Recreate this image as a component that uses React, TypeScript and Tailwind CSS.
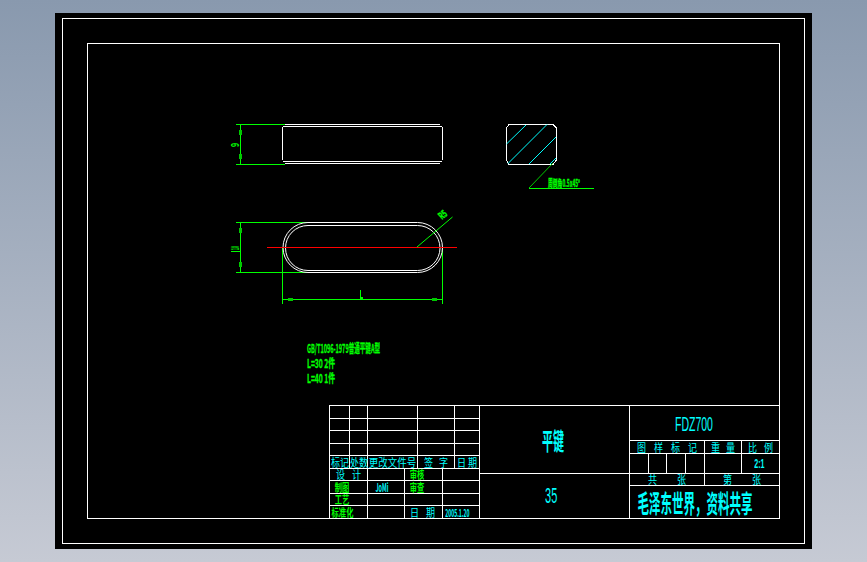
const CJK = '"Noto Sans CJK SC", "Liberation Sans", sans-serif';
const WHITE = '#ffffff';
const GREEN = '#00ff00';
const CYAN = '#00ffff';

const CYAN_TEXT = 'text-[11px] scale-x-[0.82] text-[#00ffff]';
const GREEN_TEXT = 'text-[11px] scale-x-[0.66] text-[#00ff00] font-bold';

const Label = ({
  children,
  className = CYAN_TEXT,
}: {
  children: React.ReactNode;
  className?: string;
}) => (
  <span className={`inline-block whitespace-nowrap leading-none font-['Noto_Sans_CJK_SC',sans-serif] ${className}`}>
    {children}
  </span>
);

const Cell = ({
  children,
  className = '',
}: {
  children?: React.ReactNode;
  className?: string;
}) => (
  <div className={`flex items-center justify-center overflow-visible border-white ${className}`}>
    {children}
  </div>
);

// widely spaced captions such as 图 样 标 记
const Spread = ({ text, className = '' }: { text: string; className?: string }) => (
  <div className={`flex items-center justify-between border-white ${className}`}>
    {text.split('').map((ch) => (
      <Label key={ch}>{ch}</Label>
    ))}
  </div>
);

const Drawing = () => (
  <svg
    className="block h-[361px] w-[691px] shrink-0"
    viewBox="88 44 691 361"
    fill="none"
    shapeRendering="crispEdges"
    fontFamily={CJK}
  >
    {/* front view */}
    <g stroke={WHITE}>
      <path d="M282.5 127V160M442.5 127V160" />
      <path d="M283 126.5H442M283 161.5H442" />
      <path d="M285 124.5H440M285 163.5H440" />
    </g>
    <g stroke={GREEN}>
      <path d="M236 124.5H285M236 164.5H285M240.5 124V165" />
      <path d="M236 222.5H307M236 272.5H307M240.5 222V273M231 251.5H240" />
      <path d="M282.5 248V304M442.5 248V304M282 299.5H443M360.5 290V299" />
    </g>
    <g fill="#00c800">
      <rect x="239" y="130" width="3" height="5" />
      <rect x="239" y="154" width="3" height="5" />
      <rect x="239" y="228" width="3" height="5" />
      <rect x="239" y="262" width="3" height="5" />
      <rect x="288" y="298" width="5" height="3" />
      <rect x="432" y="298" width="5" height="3" />
    </g>
    <text fill={GREEN} fontSize="11" fontWeight="700" textLength="4" lengthAdjust="spacingAndGlyphs" transform="translate(239,147) rotate(-90)">
      9
    </text>
    <text fill={GREEN} fontSize="11" fontWeight="700" textLength="4" lengthAdjust="spacingAndGlyphs" transform="translate(239,250) rotate(-90)">
      10
    </text>
    <rect x="361" y="297" width="2" height="2" fill={GREEN} />

    {/* plan view */}
    <g stroke={WHITE} shapeRendering="auto">
      <rect x="283" y="222.5" width="159.5" height="50" rx="25" />
      <rect x="285.5" y="225.5" width="154.5" height="45" rx="22.5" />
    </g>
    <path d="M267 247.5H457" stroke="#ff0000" />
    <path d="M417 247L452.5 217" stroke={GREEN} shapeRendering="auto" />
    <text fill={GREEN} stroke={GREEN} strokeWidth="0.4" fontSize="10" fontWeight="700" textLength="8" lengthAdjust="spacingAndGlyphs" transform="translate(442,220) rotate(-42)">
      R5
    </text>

    {/* section */}
    <path d="M509 124.5H553L556.5 128V160L553 164.5H509L506.5 160V128Z" stroke={WHITE} />
    <g stroke={CYAN} shapeRendering="auto">
      <path d="M506.5 144L526 125M508 163.5L547 124.5M529 164L556 137M550 164L556 158" />
    </g>
    <path d="M529 188L553 163" stroke="#00c800" shapeRendering="auto" />
    <path d="M529 188.5H594" stroke={GREEN} />
    <text x="548" y="187" fill={GREEN} stroke={GREEN} strokeWidth="0.3" fontSize="10" fontWeight="700" textLength="32" lengthAdjust="spacingAndGlyphs">
      周倒角0.5x45°
    </text>

    {/* notes */}
    <g fill={GREEN} stroke={GREEN} strokeWidth="0.3" fontWeight="700" fontSize="12">
      <text x="307" y="353" textLength="73" lengthAdjust="spacingAndGlyphs">
        GB/T1096-1979普通平键A型
      </text>
      <text x="307" y="368" textLength="28" lengthAdjust="spacingAndGlyphs">
        L=30 2件
      </text>
      <text x="307" y="383" textLength="28" lengthAdjust="spacingAndGlyphs">
        L=40 1件
      </text>
    </g>
  </svg>
);

const LeftBlock = () => (
  <div className="flex w-[150px] flex-col">
    {[0, 1, 2, 3].map((i) => (
      <div key={i} className={`grid grid-cols-[20px_18px_50px_37px_25px] ${i % 2 === 0 ? 'h-[13px]' : 'h-[12px]'}`}>
        {[0, 1, 2, 3, 4].map((j) => (
          <Cell key={j} className="border-r border-b" />
        ))}
      </div>
    ))}
    <div className="grid h-[13px] grid-cols-[20px_18px_50px_37px_25px]">
      <Cell className="border-r border-b"><Label>标记</Label></Cell>
      <Cell className="border-r border-b"><Label>处数</Label></Cell>
      <Cell className="border-r border-b"><Label className="text-[11px] scale-x-[0.86] text-[#00ffff]">更改文件号</Label></Cell>
      <Spread text="签字" className="border-r border-b px-[5px]" />
      <Spread text="日期" className="border-r border-b px-[1px]" />
    </div>
    <div className="grid h-[12px] grid-cols-[38px_37px_38px_37px]">
      <Spread text="设计" className="border-r border-b px-[5px]" />
      <Cell className="border-r border-b" />
      <Cell className="border-r border-b pr-[14px]"><Label className={GREEN_TEXT}>审核</Label></Cell>
      <Cell className="border-r border-b" />
    </div>
    <div className="grid h-[13px] grid-cols-[38px_37px_38px_37px]">
      <Cell className="border-r border-b pr-[14px]"><Label className={GREEN_TEXT}>制图</Label></Cell>
      <Cell className="border-r border-b pr-[8px]"><Label className="text-[11px] scale-x-[0.5] text-[#00ffff] font-bold">JoMi</Label></Cell>
      <Cell className="border-r border-b pr-[14px]"><Label className={GREEN_TEXT}>审查</Label></Cell>
      <Cell className="border-r border-b" />
    </div>
    <div className="grid h-[12px] grid-cols-[38px_37px_38px_37px]">
      <Cell className="border-r border-b pr-[14px]"><Label className={GREEN_TEXT}>工艺</Label></Cell>
      <Cell className="border-r border-b" />
      <Cell className="border-r border-b" />
      <Cell className="border-r border-b" />
    </div>
    <div className="grid h-[12px] grid-cols-[38px_37px_38px_37px]">
      <Cell className="border-r pr-[12px]"><Label className={GREEN_TEXT}>标准化</Label></Cell>
      <Cell className="border-r" />
      <Spread text="日期" className="border-r pl-[4px] pr-[6px]" />
      <Cell className="border-r pr-[8px]"><Label className="text-[11px] scale-x-[0.46] text-[#00ffff] font-bold">2005.1.20</Label></Cell>
    </div>
  </div>
);

const MiddleBlock = () => (
  <div className="flex w-[150px] flex-col border-r border-white">
    <Cell className="h-[68px] border-b pr-[3px]">
      <Label className="text-[24px] scale-x-[0.46] text-[#00ffff] font-bold">平键</Label>
    </Cell>
    <Cell className="h-[44px] pr-[6px]">
      <span className="inline-block scale-x-[0.5] font-['Liberation_Sans',sans-serif] text-[22px] leading-none text-[#00ffff]">35</span>
    </Cell>
  </div>
);

const RightBlock = () => (
  <div className="flex w-[149px] flex-col">
    <Cell className="h-[35px] border-b pr-[22px]">
      <span className="inline-block scale-x-[0.5] font-['Liberation_Sans',sans-serif] text-[21px] leading-none text-[#00ffff]">FDZ700</span>
    </Cell>
    <div className="grid h-[13px] grid-cols-[75px_37px_37px]">
      <Spread text="图样标记" className="border-r border-b px-[6px]" />
      <Spread text="重量" className="border-r border-b px-[5px]" />
      <Spread text="比例" className="border-b px-[5px]" />
    </div>
    <div className="grid h-[20px] grid-cols-[19px_18px_19px_19px_37px_37px]">
      <Cell className="border-r border-b" />
      <Cell className="border-r border-b" />
      <Cell className="border-r border-b" />
      <Cell className="border-r border-b" />
      <Cell className="border-r border-b" />
      <Cell className="border-b pr-[3px]">
        <span className="inline-block scale-x-[0.55] font-['Liberation_Sans',sans-serif] text-[13px] font-bold leading-none text-[#00ffff]">2:1</span>
      </Cell>
    </div>
    <div className="grid h-[12px] grid-cols-[75px_74px]">
      <Spread text="共张" className="border-r border-b px-[17px]" />
      <Spread text="第张" className="border-b px-[17px]" />
    </div>
    <Cell className="h-[32px] pr-[20px]">
      <Label className="text-[25px] scale-x-[0.46] text-[#00ffff] font-bold">毛泽东世界，资料共享</Label>
    </Cell>
  </div>
);

export default function App() {
  return (
    <div className="flex h-screen w-full items-center justify-center bg-gradient-to-b from-[#8999ae] to-[#c6cad4]">
      <div className="h-[536px] w-[757px] bg-black pt-[5px] pl-[7px]">
        <div className="h-[526px] w-[743px] border border-white pt-[24px] pl-[24px]">
          <div className="flex h-[476px] w-[693px] flex-col border border-white">
            <Drawing />
            <div className="ml-[241px] flex h-[113px] w-[450px] border-t border-l border-white">
              <LeftBlock />
              <MiddleBlock />
              <RightBlock />
            </div>
          </div>
        </div>
      </div>
    </div>
  );
}
